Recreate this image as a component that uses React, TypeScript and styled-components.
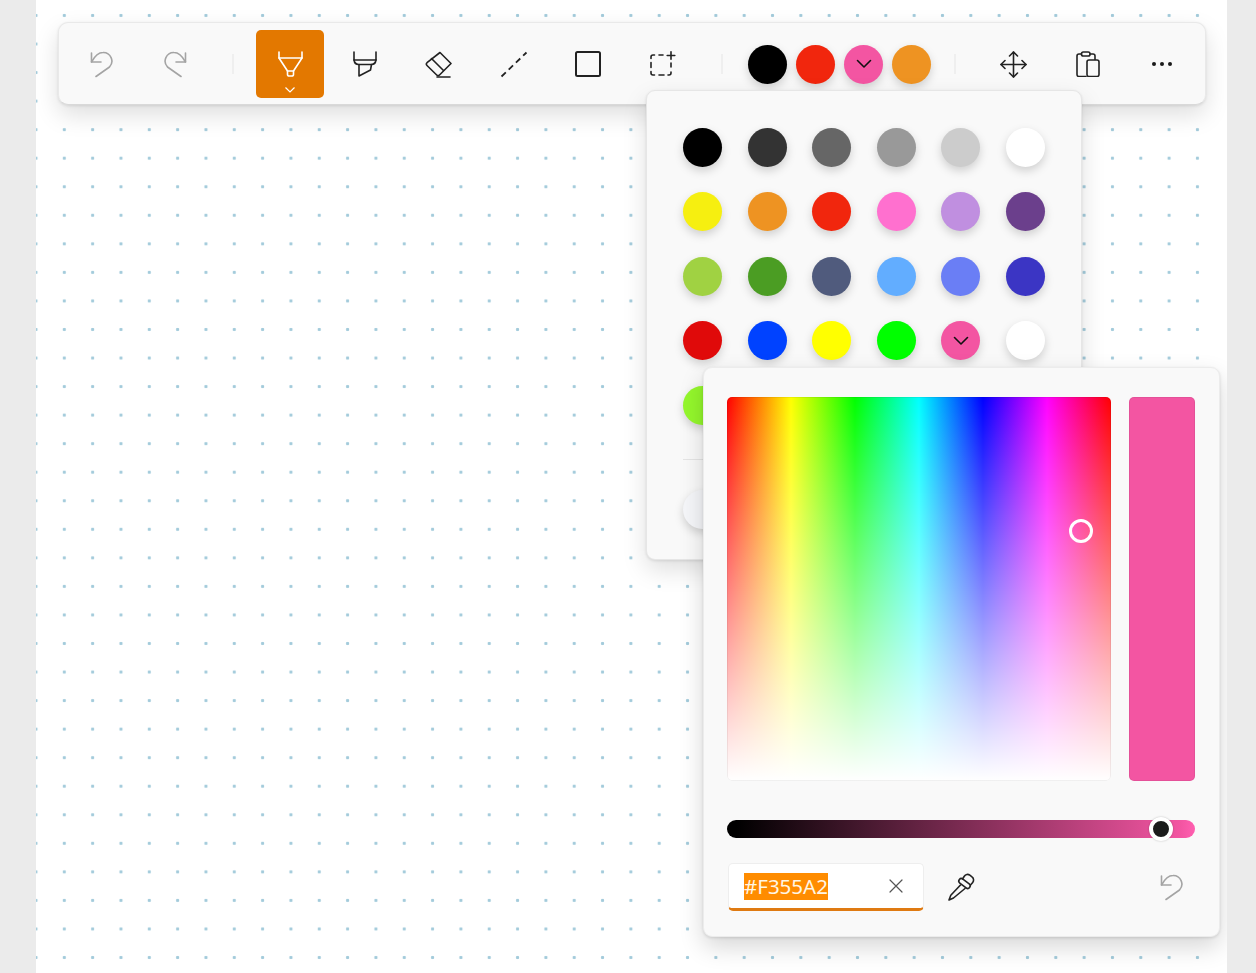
import React from 'react';
import styled, { createGlobalStyle } from 'styled-components';

const PALETTE = [
  ['#000000', '#333333', '#666666', '#999999', '#cccccc', '#ffffff'],
  ['#f6ef10', '#ee9322', '#f1260d', '#ff70cf', '#c08fe0', '#6b3f8c'],
  ['#a0d242', '#4b9d23', '#505b7d', '#62adff', '#6a7ef5', '#3b35c4'],
  ['#e00a0a', '#0042ff', '#ffff00', '#00ff00', '#f355a2', '#ffffff'],
  ['#94f72c', '#ffffff', '#ffffff', '#ffffff', '#ffffff', '#ffffff'],
];

const PEN_COLORS = ['#000000', '#f1260d', '#f355a2', '#ee9322'];
const ACTIVE_COLOR = '#f355a2';

const GlobalStyle = createGlobalStyle`
  html, body {
    margin: 0;
    height: 973px;
    overflow: hidden;
    background: #ebebeb;
    font-family: "Noto Sans", "Open Sans", sans-serif;
  }
`;

const Sheet = styled.main`
  position: relative;
  width: 1191px;
  height: 973px;
  margin-left: 36px;
  background: #ffffff;
  overflow: hidden;
`;

const DotGrid = styled.div`
  width: 1176px;
  height: 973px;
  padding: 21.5px 0 0 22px;
  box-sizing: border-box;
  background-image: radial-gradient(circle, #a3cbdb 0, #a3cbdb 1.3px, transparent 2px);
  background-size: 28.33px 28.56px;
  background-position: 14.15px 1.2px;
`;

const Toolbar = styled.div`
  display: flex;
  align-items: center;
  width: 1148px;
  height: 83.5px;
  padding: 7.5px 0 6px 8px;
  box-sizing: border-box;
  background: #f9f9f9;
  border: 1px solid #e9e9e9;
  border-bottom-color: #d9d9d9;
  border-radius: 10px;
  box-shadow: 0 10px 24px rgba(0, 0, 0, 0.13), 0 1px 3px rgba(0, 0, 0, 0.1);
`;

const ToolGroup = styled.div`
  display: flex;
  align-items: center;
  gap: 6.4px;
`;

const ColorGroup = styled.div`
  display: flex;
  align-items: center;
  gap: 9px;
`;

const Separator = styled.span<{ $gap: number }>`
  flex: none;
  width: 2px;
  height: 20px;
  margin: 0 ${({ $gap }) => $gap}px;
  background: #efefef;
`;

const ToolButton = styled.button<{ $active?: boolean }>`
  position: relative;
  display: flex;
  align-items: center;
  justify-content: center;
  flex: none;
  width: 68px;
  height: 68px;
  padding: 0;
  border: 0;
  border-radius: 5px;
  background: ${({ $active }) => ($active ? '#e37800' : 'transparent')};
  color: ${({ $active }) => ($active ? '#ffffff' : '#222222')};
`;

const ToolCaret = styled.svg`
  position: absolute;
  left: 29px;
  bottom: 5px;
  width: 10px;
  height: 6px;
`;

const Swatch = styled.span<{ $color: string }>`
  display: flex;
  align-items: center;
  justify-content: center;
  flex: none;
  width: 39px;
  height: 39px;
  border-radius: 50%;
  background: ${({ $color }) => $color};
  box-shadow: 0 4px 10px rgba(0, 0, 0, 0.17);
`;

const ColorFlyout = styled.div`
  position: absolute;
  left: 610px;
  top: 90px;
  width: 436px;
  height: 470px;
  padding: 36.5px 36px 0;
  box-sizing: border-box;
  background: #f9f9f9;
  border: 1px solid #e6e6e6;
  border-radius: 9px;
  box-shadow: 0 10px 24px rgba(0, 0, 0, 0.13), 0 1px 3px rgba(0, 0, 0, 0.1);
`;

const SwatchGrid = styled.div`
  display: grid;
  grid-template-columns: repeat(6, 39px);
  grid-auto-rows: 39px;
  justify-content: space-between;
  row-gap: 25.5px;
`;

const FlyoutDivider = styled.hr`
  height: 1px;
  margin: 34.5px 0 30px;
  border: 0;
  background: #e5e5e5;
`;

const CustomSwatch = styled.span`
  display: block;
  width: 39px;
  height: 39px;
  border-radius: 50%;
  background: #f5f6f9;
  box-shadow: 0 4px 10px rgba(0, 0, 0, 0.17);
`;

const PickerFlyout = styled.div`
  position: absolute;
  left: 667px;
  top: 367px;
  width: 517px;
  height: 570px;
  padding: 29px 24px 0 23px;
  box-sizing: border-box;
  background: #f9f9f9;
  border: 1px solid #ececec;
  border-radius: 9px;
  box-shadow: 0 10px 24px rgba(0, 0, 0, 0.16), 0 1px 3px rgba(0, 0, 0, 0.12);
`;

const PickerTop = styled.div`
  display: flex;
  justify-content: space-between;
`;

const Spectrum = styled.div`
  position: relative;
  width: 384px;
  height: 384px;
  box-sizing: border-box;
  border-radius: 5px;
  box-shadow: inset 0 0 0 1px rgba(0, 0, 0, 0.06);
  background:
    linear-gradient(to bottom, rgba(255, 255, 255, 0), #ffffff),
    linear-gradient(to right, #ff0000, #ffff00 16.67%, #00ff00 33.33%, #00ffff 50%, #0000ff 66.67%, #ff00ff 83.33%, #ff0000);
`;

const SpectrumHandle = styled.span`
  position: absolute;
  left: 342px;
  top: 122px;
  width: 24px;
  height: 24px;
  box-sizing: border-box;
  border: 3px solid #ffffff;
  border-radius: 50%;
`;

const Preview = styled.div<{ $color: string }>`
  width: 66px;
  height: 384px;
  box-sizing: border-box;
  border: 1px solid rgba(0, 0, 0, 0.06);
  border-radius: 5px;
  background: ${({ $color }) => $color};
`;

const ValueSlider = styled.div<{ $color: string }>`
  position: relative;
  height: 18px;
  margin-top: 39px;
  border-radius: 9px;
  background: linear-gradient(to right, #000000 2%, ${({ $color }) => $color} 97%, #ff5fb0);
`;

const SliderThumb = styled.span`
  position: absolute;
  left: 422px;
  top: -3px;
  width: 24px;
  height: 24px;
  box-sizing: border-box;
  border: 4px solid #ffffff;
  border-radius: 50%;
  background: #1b1b1b;
  box-shadow: 0 0 2px rgba(0, 0, 0, 0.25);
`;

const HexRow = styled.div`
  display: flex;
  align-items: center;
  margin-top: 25px;
`;

const HexField = styled.div`
  display: flex;
  align-items: center;
  justify-content: space-between;
  width: 196px;
  height: 48px;
  margin-left: 1px;
  padding: 0 20px 0 15px;
  box-sizing: border-box;
  background: #ffffff;
  border: 1px solid #eeeeee;
  border-bottom: 3px solid #df7a12;
  border-radius: 5px;
`;

const HexValue = styled.span`
  font-size: 20.5px;
  line-height: 27px;
  color: #fff6e5;
  background: #ff8c00;
`;

const IconSlot = styled.span<{ $push?: boolean }>`
  display: flex;
  margin-left: ${({ $push }) => ($push ? 'auto' : '24px')};
  margin-right: ${({ $push }) => ($push ? '12px' : '0')};
`;

const Glyph = styled.svg<{ $weight?: number; $shift?: number }>`
  display: block;
  flex: none;
  margin-left: ${({ $shift }) => $shift ?? 0}px;
  fill: none;
  stroke: currentColor;
  stroke-width: ${({ $weight }) => $weight ?? 1.6};
  stroke-linecap: round;
  stroke-linejoin: round;
`;

const MutedGlyph = styled(Glyph)`
  stroke: #a4a4a4;
`;

const Chevron = () => (
  <Glyph width={16} height={16} viewBox="0 0 16 16" color="#111111">
    <path d="M1.5 4.5 8 11l6.5-6.5" />
  </Glyph>
);

const UndoIcon = () => (
  <MutedGlyph width="23" height="28" viewBox="0 0 23 28">
    <path d="M1.5 3v9h9.5" />
    <path d="M1.5 12C4.500 6.500 8.500 2.500 13 2.500a8.600 8.600 0 0 1 6.500 14.500L6 26.500" />
  </MutedGlyph>
);

const RedoIcon = () => (
  <MutedGlyph width="23" height="28" viewBox="0 0 23 28">
    <path d="M21.5 3v9H12" />
    <path d="M21.5 12C18.500 6.500 14.500 2.500 10 2.500A8.600 8.600 0 0 0 3.500 17L17 26.500" />
  </MutedGlyph>
);

const PenIcon = () => (
  <Glyph width="25" height="26" viewBox="0 0 25 26">
    <path d="M1 1v6h23V1" />
    <path d="M1 7l8.500 13h6L24 7" />
    <path d="M9.500 20v3.500a1.500 1.500 0 0 0 1.500 1.500h3a1.500 1.500 0 0 0 1.500-1.500V20" />
  </Glyph>
);

const HighlighterIcon = () => (
  <Glyph width="24" height="26" viewBox="0 0 24 26">
    <path d="M1 1v8h22V1" />
    <path d="M1 9c.5 3 2 4.500 4.500 4.500h13c2.500 0 4-1.500 4.500-4.500" />
    <path d="M6 13.500V25l11.500-6 1-5.500" />
  </Glyph>
);

const EraserIcon = () => (
  <Glyph width="28" height="27" viewBox="0 0 28 27">
    <path d="M15 1.500 26 12.500 14.500 24a2 2 0 0 1-2.800 0L2 14.500a2 2 0 0 1 0-2.800z" />
    <path d="M6.500 7.500l12 12" />
    <path d="M12 26h13" />
  </Glyph>
);

const LineIcon = () => (
  <Glyph width="28" height="27" viewBox="0 0 28 27" $weight={1.8}>
    <path d="M1.500 25.500 26.500 1.500" strokeDasharray="6 4" strokeLinecap="butt" />
  </Glyph>
);

const ShapeIcon = () => (
  <Glyph width="26" height="26" viewBox="0 0 26 26" $weight={2}>
    <rect x="1" y="1" width="24" height="24" rx="1.500" />
  </Glyph>
);

const SelectIcon = () => (
  <Glyph width="26" height="26" viewBox="0 0 26 26" $shift={2}>
    <path d="M1 7.500V6a2 2 0 0 1 2-2h1.500M9 4h4M1 11.500v5M1 20.500V22a2 2 0 0 0 2 2h1.500M9 24h5M18 24h1a2 2 0 0 0 2-2v-1M21 16v-4" />
    <path d="M21 0.800v7.500M17.200 4.500h7.600" />
  </Glyph>
);

const MoveIcon = () => (
  <Glyph width="27" height="27" viewBox="0 0 27 27">
    <path d="M13.500 1v25M1 13.500h25" />
    <path d="M9.500 5l4-4 4 4M9.500 22l4 4 4-4M5 9.500l-4 4 4 4M22 9.500l4 4-4 4" />
  </Glyph>
);

const ClipboardIcon = () => (
  <Glyph width="24" height="26" viewBox="0 0 24 26">
    <path d="M5.500 3H3a2 2 0 0 0-2 2v18.500a2 2 0 0 0 2 2h7" />
    <path d="M14 3h3a2 2 0 0 1 2 2v3.500" />
    <rect x="5.500" y="1" width="8.500" height="4" rx="1.800" />
    <rect x="11" y="9" width="12" height="16.500" rx="2" />
  </Glyph>
);

const MoreIcon = () => (
  <svg width="22" height="6" viewBox="0 0 22 6">
    <circle cx="3" cy="3" r="2" fill="#1a1a1a" />
    <circle cx="11" cy="3" r="2" fill="#1a1a1a" />
    <circle cx="19" cy="3" r="2" fill="#1a1a1a" />
  </svg>
);

const CloseIcon = () => (
  <Glyph width="14" height="14" viewBox="0 0 14 14" color="#555555" $weight={1.2}>
    <path d="M1 1l12 12M13 1 1 13" />
  </Glyph>
);

const EyedropperIcon = () => (
  <Glyph width="28" height="28" viewBox="0 0 28 28" color="#222222">
    <path d="M14.500 6l1.800-2.800a3.800 3.800 0 0 1 5.500-1l2.200 1.700a3.800 3.800 0 0 1 .7 5.500L22.500 12" />
    <rect x="10" y="8" width="13" height="5" rx="2.500" transform="rotate(38 16.500 10.500)" />
    <path d="M12.500 12 2.800 22.200 1 27l4.500-2L17 15.500" />
  </Glyph>
);

function PenSwatch({ color }: { color: string }) {
  return (
    <Swatch $color={color}>{color === ACTIVE_COLOR && <Chevron />}</Swatch>
  );
}

function App() {
  return (
    <>
      <GlobalStyle />
      <Sheet>
        <DotGrid>
          <Toolbar>
            <ToolGroup>
              <ToolButton><UndoIcon /></ToolButton>
              <ToolButton><RedoIcon /></ToolButton>
            </ToolGroup>
            <Separator $gap={22.5} />
            <ToolGroup>
              <ToolButton $active>
                <PenIcon />
                <ToolCaret viewBox="0 0 10 6" fill="none" stroke="#ffffff" strokeWidth="1.200">
                  <path d="M.5.500 5 5 9.500.5" />
                </ToolCaret>
              </ToolButton>
              <ToolButton><HighlighterIcon /></ToolButton>
              <ToolButton><EraserIcon /></ToolButton>
              <ToolButton><LineIcon /></ToolButton>
              <ToolButton><ShapeIcon /></ToolButton>
              <ToolButton><SelectIcon /></ToolButton>
            </ToolGroup>
            <Separator $gap={25} />
            <ColorGroup>
              {PEN_COLORS.map((color) => (
                <PenSwatch color={color} key={color} />
              ))}
            </ColorGroup>
            <Separator $gap={23} />
            <ToolGroup>
              <ToolButton><MoveIcon /></ToolButton>
              <ToolButton><ClipboardIcon /></ToolButton>
              <ToolButton><MoreIcon /></ToolButton>
            </ToolGroup>
          </Toolbar>
        </DotGrid>

        <ColorFlyout>
          <SwatchGrid>
            {PALETTE.flat().map((color, index) => (
              <PenSwatch color={color} key={index} />
            ))}
          </SwatchGrid>
          <FlyoutDivider />
          <CustomSwatch />
        </ColorFlyout>

        <PickerFlyout>
          <PickerTop>
            <Spectrum>
              <SpectrumHandle />
            </Spectrum>
            <Preview $color={ACTIVE_COLOR} />
          </PickerTop>
          <ValueSlider $color={ACTIVE_COLOR}>
            <SliderThumb />
          </ValueSlider>
          <HexRow>
            <HexField>
              <HexValue>#F355A2</HexValue>
              <CloseIcon />
            </HexField>
            <IconSlot><EyedropperIcon /></IconSlot>
            <IconSlot $push><UndoIcon /></IconSlot>
          </HexRow>
        </PickerFlyout>
      </Sheet>
    </>
  );
}

export default App;
